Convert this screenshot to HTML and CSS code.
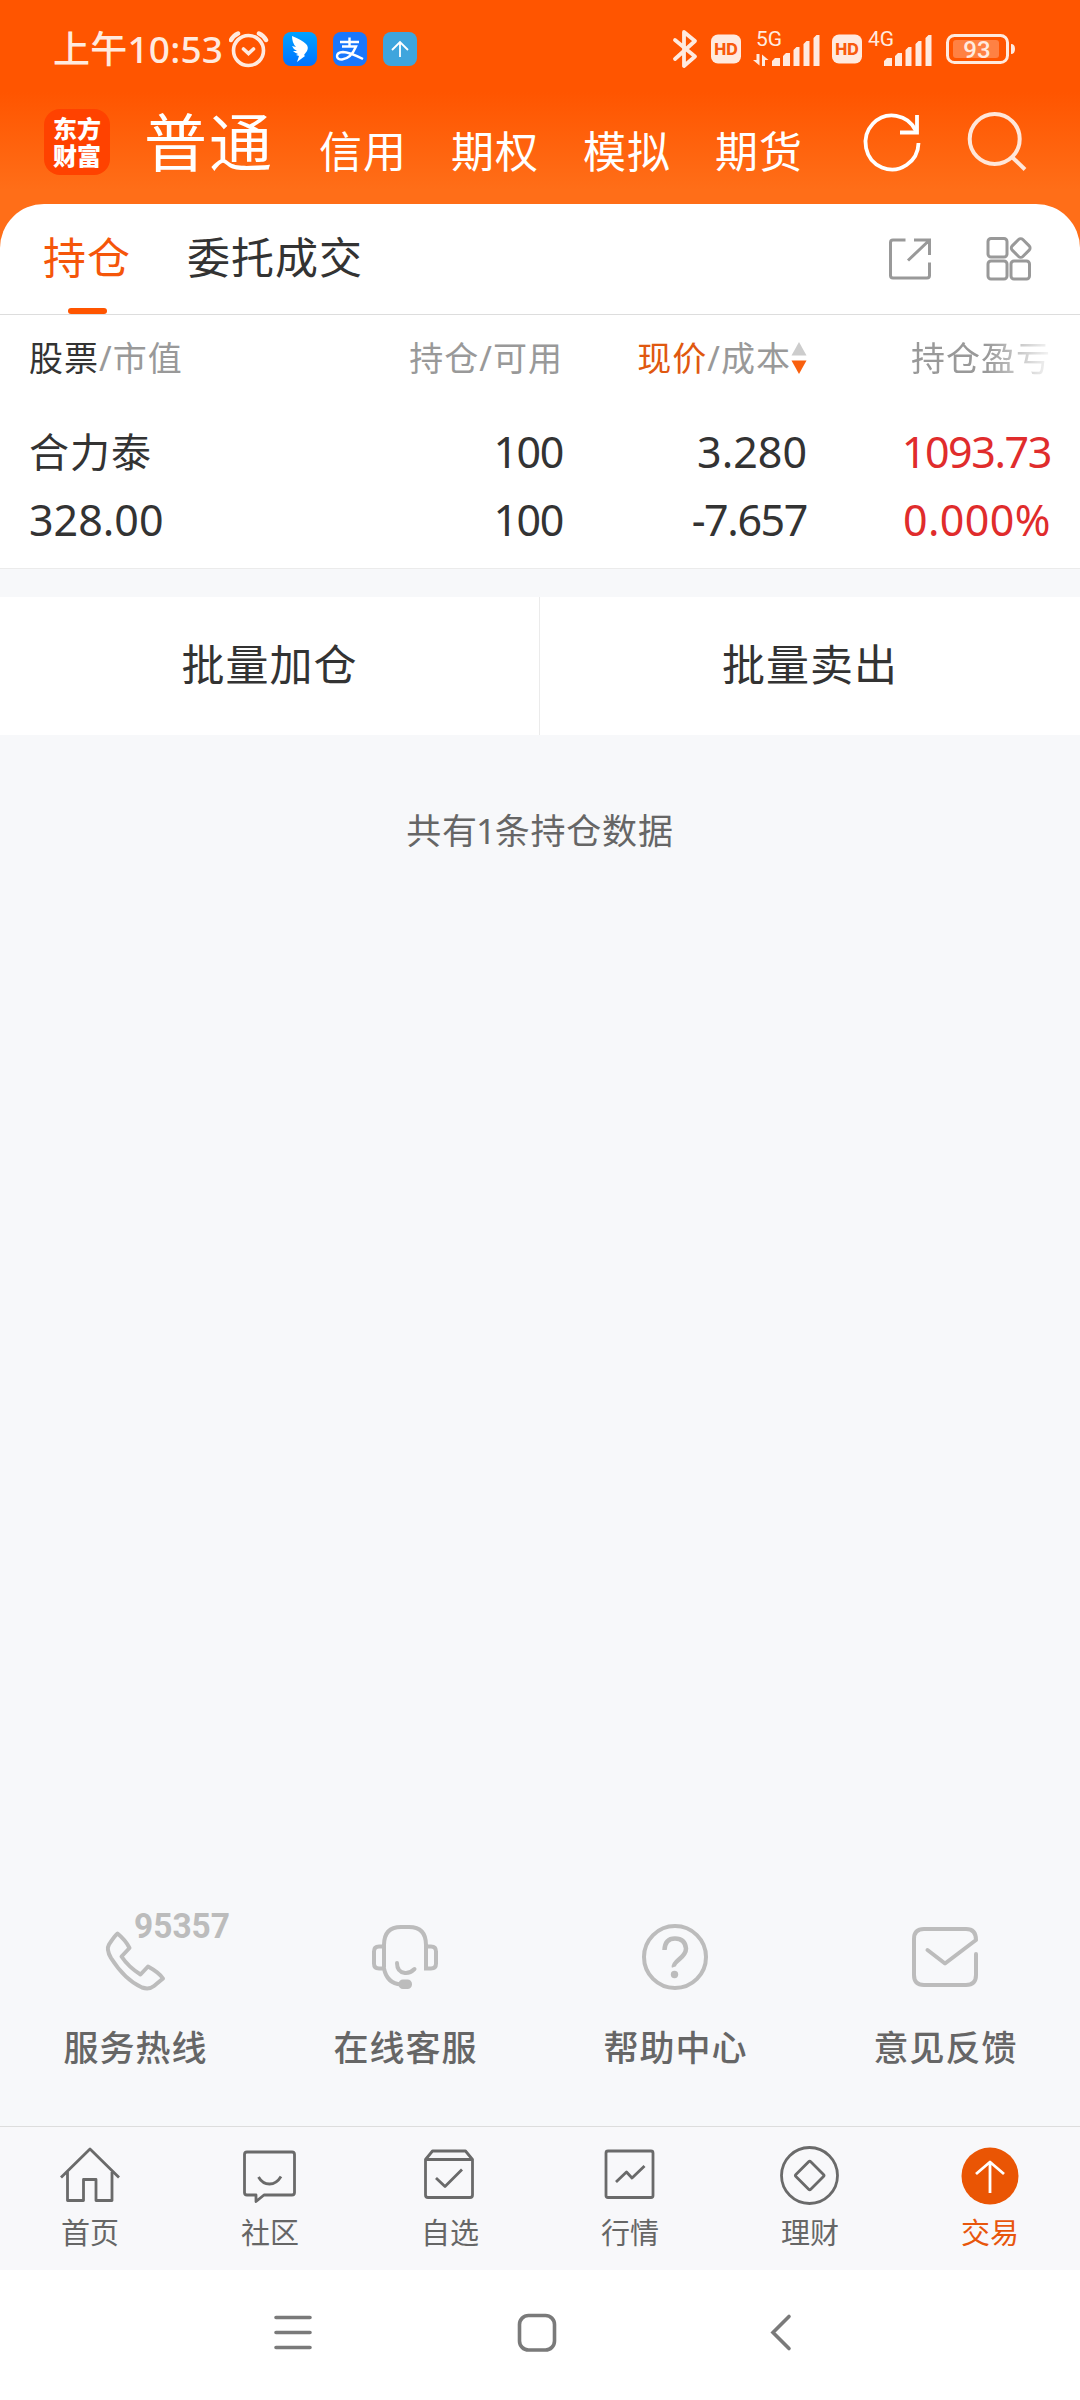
FILE: index.html
```html
<!DOCTYPE html>
<html lang="zh-CN">
<head>
<meta charset="utf-8">
<title>持仓</title>
<link rel="stylesheet" href="styles.css">
</head>
<body>
<div class="screen">
  <header class="top">
    <div class="status">
      <span class="clock">上午10:53</span>
      <svg class="alarm" width="40" height="40" viewBox="229 29 40 40" fill="none" stroke="#ffeadf" stroke-width="3.6" stroke-linecap="round"><circle cx="248.500" cy="50.500" r="15"/><path d="M243.500 49l5 4.500 5-4.500"/><path d="M231 40q2.500-4.500 7-6.500M266 40q-2.500-4.500-7-6.500" stroke-width="4.500"/></svg>
      <svg class="app" width="34" height="34" viewBox="283 32 34 34"><defs><linearGradient id="wing" x2="0" y2="1"><stop stop-color="#00a2ff"/><stop offset="1" stop-color="#0072ff"/></linearGradient></defs><rect x="283" y="32" width="34" height="34" rx="8" fill="url(#wing)"/><path d="M292 36q10 4 14 8 3 3 1 7l-3 4 1 1-8 6 2-6-3-1 2-1q-3-1-5-3l4 0q-4-2-5-5l4 1q-4-4-4-11z" fill="#fff"/></svg>
      <svg class="app" width="34" height="34" viewBox="333 32 34 34"><rect x="333" y="32" width="34" height="34" rx="8" fill="#1977fc"/><path d="M340 42h19M349.500 37.500v9M342 46.500h14q-5 12-14 13-5 0-5-3.500t6-4q6 0 20 7" fill="none" stroke="#fff" stroke-width="2.400"/></svg>
      <svg class="app" width="34" height="34" viewBox="383 32 34 34"><rect x="383" y="32" width="34" height="34" rx="8" fill="#3ea5dd"/><path d="M400 57V42M392 50l8-8 8 8" fill="none" stroke="#fff" stroke-width="1.800"/></svg>
      <div class="signals">
        <svg width="26" height="40" viewBox="672 29 26 40" fill="none" stroke="#ffeadf" stroke-width="3.800" stroke-linejoin="round" stroke-linecap="round"><path d="M675 40l20 16.500-11 9.500V32l11 9-20 18"/></svg>
        <svg class="hd" width="30" height="30" viewBox="0 0 30 30"><rect width="30" height="29" y=".5" rx="7" fill="#ffeadf"/><text x="15" y="21" text-anchor="middle" fill="#f85a0c">HD</text></svg>
        <svg class="cell5" width="69" height="44" viewBox="752 26 69 44" fill="#ffeadf"><text x="756" y="45">5G</text><path d="M772 65v-5l3-3h5v8zM783 65V55l3-3h4v13zM793.500 65V49l3-3h3v19zM803.500 65V43l3-3h3v25zM813.500 65V37l3-3h3v31zM759.500 53v11.500l-6.500-5.500h3.500v-6zM762 65V53.500l6.500 5.500h-3.500v6z"/></svg>
        <svg class="hd" width="30" height="30" viewBox="0 0 30 30"><rect width="30" height="29" y=".5" rx="7" fill="#ffeadf"/><text x="15" y="21" text-anchor="middle" fill="#f85a0c">HD</text></svg>
        <svg class="cell4" width="66" height="44" viewBox="867 26 66 44" fill="#ffeadf"><text x="868" y="45">4G</text><path d="M884 65v-5l3-3h5v8zM895 65V55l3-3h4v13zM905.500 65V49l3-3h3v19zM915.500 65V43l3-3h3v25zM925.500 65V37l3-3h3v31z"/></svg>
        <svg class="battery" width="70" height="32" viewBox="946 33 70 32"><rect x="947.500" y="35.500" width="60" height="27" rx="7" fill="none" stroke="#ffeadf" stroke-width="3"/><rect x="953" y="40" width="46" height="18" rx="3" fill="#ff8143"/><path d="M1011 44q4 0 4 5t-4 5z" fill="#ffeadf"/><text x="977" y="58" text-anchor="middle" fill="#ffeadf">93</text></svg>
      </div>
    </div>
    <div class="accounts">
      <div class="logo"><span>东方</span><span>财富</span></div>
      <nav class="types"><b>普通</b><a>信用</a><a>期权</a><a>模拟</a><a>期货</a></nav>
      <svg class="refresh" width="62" height="66" viewBox="861 109 62 66" fill="none" stroke="#fff" stroke-width="3.800"><path d="M918.500 143A26.500 27 0 1 1 916 131"/><path d="M917 115v17.500h-17"/></svg>
      <svg class="search" width="62" height="66" viewBox="966 109 62 66" fill="none" stroke="#ffe6d9" stroke-width="4"><circle cx="994.700" cy="139" r="25"/><path d="M1012 157l13 12.500"/></svg>
    </div>
  </header>

  <section class="card">
    <div class="tabs">
      <a class="tab on">持仓</a><a class="tab">委托成交</a>
      <svg class="share" width="44" height="44" viewBox="888 237 44 44" fill="none" stroke="#999" stroke-width="3"><path d="M905.500 240H893q-2.500 0-2.500 2.500v33q0 2.500 2.500 2.500h34q2.500 0 2.500-2.500V262.500M914 240h15.500v15M928.500 241L908 260.500"/></svg>
      <svg class="grid" width="48" height="46" viewBox="985 237 48 46" fill="none" stroke="#999" stroke-width="3"><rect x="988" y="239.500" width="19" height="18.500" rx="3"/><rect x="988" y="262" width="19" height="18" rx="3"/><rect x="1011" y="262" width="18.500" height="18" rx="3"/><rect x="1013.200" y="241.500" width="15" height="15" rx="3" transform="rotate(45 1020.700 249)"/></svg>
    </div>
    <div class="row head">
      <span><i>股票</i>/市值</span><span>持仓/可用</span>
      <span class="sorted"><em>现价</em>/成本<svg width="16" height="34" viewBox="0 0 16 34"><path d="M8 1l7.500 13.500H.5z" fill="#ccc"/><path d="M.5 19.500h15L8 33z" fill="#f9600e"/></svg></span>
      <span class="fade">持仓盈亏</span>
    </div>
    <div class="row"><span class="name">合力泰</span><span class="num">100</span><span>3.280</span><span class="num up">1093.73</span></div>
    <div class="row"><span>328.00</span><span class="num">100</span><span class="num">-7.657</span><span class="rate up">0.000%</span></div>
  </section>

  <section class="batch"><button>批量加仓</button><button>批量卖出</button></section>
  <p class="count">共有<span>1</span>条持仓数据</p>

  <section class="services">
    <div class="service">
      <svg width="200" height="92" viewBox="35 1902 200 92" fill="none" stroke="#bcbcbc" stroke-width="4" stroke-linejoin="round"><path d="M117.500 1933.500q-3 2.500-8.500 11-3 5 2 13.500 14 22 31 29.500 7 2.500 12-1.500l9-7.500q-4-6-15-12l-7.500 8q-12-7.500-19-18l8-8.500q-4-8-12-14.500z"/><text class="hotline" x="134" y="1938" textLength="96" lengthAdjust="spacingAndGlyphs">95357</text></svg>
      <span>服务热线</span>
    </div>
    <div class="service">
      <svg width="70" height="92" viewBox="370 1902 70 92" fill="none" stroke="#bcbcbc" stroke-width="4" stroke-linecap="round"><path d="M384 1967v-22q0-18 17-18h8q17 0 17 18v23.500h5q5 0 5-5v-12q0-5-5-5h-5M384 1946.500h-5q-5 0-5 5v12q0 5 5 5h5q3 15 17 16"/><path d="M397 1963q0 9 8 10 5 .5 9.500-4"/><rect x="401" y="1982" width="8.500" height="4.500" rx="2" stroke-width="5" fill="#bcbcbc"/></svg>
      <span>在线客服</span>
    </div>
    <div class="service">
      <svg width="70" height="92" viewBox="640 1902 70 92" fill="none" stroke="#bcbcbc" stroke-width="4"><circle cx="675" cy="1957" r="31"/><path d="M664.500 1950q.5-11.500 10.500-11.500t11 10q0 5-6.500 10.500t-5.500 8" stroke-width="4.500"/><circle cx="674.500" cy="1974.500" r="3.700" fill="#bcbcbc" stroke="none"/></svg>
      <span>帮助中心</span>
    </div>
    <div class="service">
      <svg width="70" height="92" viewBox="910 1902 70 92" fill="none" stroke="#bcbcbc" stroke-width="4" stroke-linecap="round" stroke-linejoin="round"><path d="M976 1954v21q0 10-10 10h-42q-10 0-10-10v-36q0-10 10-10h42q10 0 10 11L945 1963.500l-17.500-13.500"/></svg>
      <span>意见反馈</span>
    </div>
  </section>

  <nav class="tabbar">
    <a><svg width="64" height="64" viewBox="58 2143 64 64"><path d="M61 2177.500l29-28.500 29 28.500M67.500 2172v28.500h16v-21h12.500v21h16V2172"/></svg>首页</a>
    <a><svg width="64" height="64" viewBox="238 2143 64 64"><path d="M247 2152h45q2.500 0 2.500 2.500v38q0 2.500-2.500 2.500h-28l-8 6.500V2195h-9q-2.500 0-2.500-2.500v-38q0-2.500 2.500-2.500z"/><path d="M258.500 2177q4 7 11 7t11.500-7.500"/></svg>社区</a>
    <a><svg width="64" height="64" viewBox="418 2143 64 64"><path d="M425.500 2159.500l7-8.500h33l7 8.500zM425.500 2159.500V2195q0 2.500 2.500 2.500h42q2.500 0 2.500-2.500v-35.500M436 2178l9 8.500 17-17"/></svg>自选</a>
    <a><svg width="64" height="64" viewBox="598 2143 64 64"><rect x="606" y="2151" width="47" height="46.500" rx="2"/><path d="M616 2182l10.500-10 5.500 6 12.500-12"/></svg>行情</a>
    <a><svg width="64" height="64" viewBox="778 2143 64 64"><circle cx="809.500" cy="2175.500" r="28"/><rect x="799.200" y="2165" width="21" height="21" rx="1.500" transform="rotate(45 809.700 2175.500)"/></svg>理财</a>
    <a class="on"><svg width="64" height="64" viewBox="958 2143 64 64"><circle cx="990" cy="2176" r="28.500" fill="#ea5504" stroke="none"/><path d="M990 2193v-31M976 2174l14-12 14 12" stroke="#fff"/></svg>交易</a>
  </nav>

  <div class="sysnav">
    <svg width="40" height="40" viewBox="0 0 40 40"><path d="M3 4.500h34M3 19.500h34M3 34.500h34"/></svg>
    <svg width="40" height="40" viewBox="0 0 40 40"><rect x="2.500" y="2.500" width="35" height="34.500" rx="9"/></svg>
    <svg width="40" height="40" viewBox="0 0 40 40"><path d="M28 3.500L12 19.500l16 16"/></svg>
  </div>
</div>
</body>
</html>
```
FILE: styles.css
```css
* { box-sizing: border-box; }
body {
  margin: 0;
  font-family: "Noto Sans", "Noto Sans CJK SC", sans-serif;
  color: #333;
}
svg { display: block; flex: none; }
.screen {
  width: 1080px;
  height: 2400px;
  display: flex;
  flex-direction: column;
  background: #f7f8fa;
  overflow: hidden;
}

/* orange header */
.top {
  height: 260px;
  margin-bottom: -56px;
  flex: none;
  background: linear-gradient(#ff5500 92px, #ff6e18 190px);
}
.status {
  height: 98px;
  display: flex;
  align-items: center;
  padding: 0 64px 0 53px;
}
.clock {
  width: 176px;
  font-size: 37px;
  line-height: 98px;
  font-weight: 500;
  color: #ffeadf;
  white-space: nowrap;
  letter-spacing: 0.2px;
}
.alarm { margin-right: 14px; }
.app { margin-right: 16px; }
.signals {
  flex: 1;
  display: flex;
  justify-content: flex-end;
  align-items: center;
}
.hd { margin-left: 13px; }
.hd text { font: 800 16px "Inter", sans-serif; }
.cell5 { margin: 0 -2px 0 11px; }
.cell4 { margin: 0 13px 0 5px; }
.cell5 text, .cell4 text { font: 400 21px "Roboto", sans-serif; }
.battery text { font: 500 24px "Roboto", sans-serif; }

.accounts {
  height: 88px;
  display: flex;
  align-items: center;
  padding: 0 52px 0 44px;
}
.logo {
  display: flex;
  flex-direction: column;
  justify-content: center;
  align-items: center;
  gap: 2px;
  width: 66px;
  height: 66px;
  border-radius: 16px;
  background: #ff4200;
  color: #fff;
  font-weight: 900;
  font-size: 24px;
  line-height: 25px;
}
.types {
  flex: 1;
  display: flex;
  align-items: center;
  gap: 44px;
  margin-left: 34px;
  color: #fff;
  font-size: 43px;
  line-height: 60px;
  letter-spacing: 1px;
}
.types a { padding-top: 20px; }
.types b {
  margin-right: 1px;
  font-weight: 400;
  font-size: 63px;
  letter-spacing: 2px;
}
.refresh { margin-right: 43px; }

/* positions card */
.card {
  height: 365px;
  flex: none;
  border-radius: 44px 44px 0 0;
  border-bottom: 1px solid #ebebeb;
  background: #fff;
}
.tabs {
  height: 111px;
  display: flex;
  align-items: center;
  padding: 0 47px 0 43px;
  border-bottom: 1px solid #ddd;
  font-size: 43px;
  letter-spacing: 1px;
}
.tab {
  height: 110px;
  line-height: 108px;
  margin-right: 56px;
}
.tab.on {
  display: flex;
  flex-direction: column;
  align-items: center;
  color: #f5560a;
}
.tab.on::after {
  content: "";
  width: 39px;
  height: 6px;
  margin-top: -4px;
  border-radius: 3px;
  background: #ff5500;
}
.share { margin-left: auto; margin-right: 53px; }
.row {
  height: 68px;
  display: grid;
  grid-template-columns: 290px 244px 244px 244px;
  padding: 0 29px;
  font-size: 43px;
  line-height: 69px;
  white-space: nowrap;
}
.row span { text-align: right; }
.row span:first-child { text-align: left; }
.row .name { font-size: 40px; letter-spacing: 1px; }
.row .num { letter-spacing: -1.4px; }
.row .rate { letter-spacing: 0.4px; }
.row .up { color: #e02c2c; }
.head {
  height: 102px;
  line-height: 86px;
  font-size: 34px;
  letter-spacing: 1px;
  color: #999;
}
.head i { font-style: normal; color: #333; }
.head em { font-style: normal; color: #e0580f; }
.head .sorted {
  height: 86px;
  display: flex;
  justify-content: flex-end;
  align-items: center;
}
.fade {
  -webkit-mask-image: linear-gradient(90deg, #000 180px, transparent 250px);
  mask-image: linear-gradient(90deg, #000 180px, transparent 250px);
}

/* batch actions */
.batch {
  display: grid;
  grid-template-columns: 540px 540px;
  height: 138px;
  margin-top: 28px;
  flex: none;
}
.batch button {
  border: 0;
  background: #fff;
  color: #333;
  font-family: inherit;
  font-size: 43px;
  letter-spacing: 1px;
  padding: 0 0 7px;
}
.batch button:first-child { border-right: 1px solid #ebebeb; }
.count {
  margin: 66px 0 0;
  font-size: 35px;
  line-height: 60px;
  letter-spacing: 0.8px;
  text-align: center;
  color: #666;
}
.count span { margin: 0 -2px; }

/* service shortcuts */
.services {
  display: grid;
  grid-template-columns: repeat(4, 270px);
  height: 224px;
  margin-top: auto;
}
.service {
  display: flex;
  flex-direction: column;
  align-items: center;
  font-size: 35px;
  line-height: 60px;
  font-weight: 500;
  letter-spacing: 1px;
  color: #666;
}
.service svg { margin-bottom: 24px; }
.service span { padding-left: 1px; }
.hotline {
  font: 700 35px "Roboto", sans-serif;
  letter-spacing: 0;
  fill: #bcbcbc;
  stroke: none;
}

/* app tab bar */
.tabbar {
  display: grid;
  grid-template-columns: repeat(6, 180px);
  height: 144px;
  flex: none;
  border-top: 1px solid #ddd;
  background: #f8f8fa;
}
.tabbar a {
  display: flex;
  flex-direction: column;
  align-items: center;
  padding-top: 16px;
  font-size: 29px;
  line-height: 52px;
  color: #666;
}
.tabbar svg {
  fill: none;
  stroke: #6a6a6a;
  stroke-width: 2.8;
  stroke-linejoin: round;
}
.tabbar .on { color: #e8560c; }

/* system navigation */
.sysnav {
  height: 130px;
  flex: none;
  display: flex;
  align-items: flex-start;
  gap: 204px;
  padding: 43px 0 0 273px;
  background: #fff;
}
.sysnav svg {
  fill: none;
  stroke: #7a7a7a;
  stroke-width: 3.6;
  stroke-linecap: round;
}
```
